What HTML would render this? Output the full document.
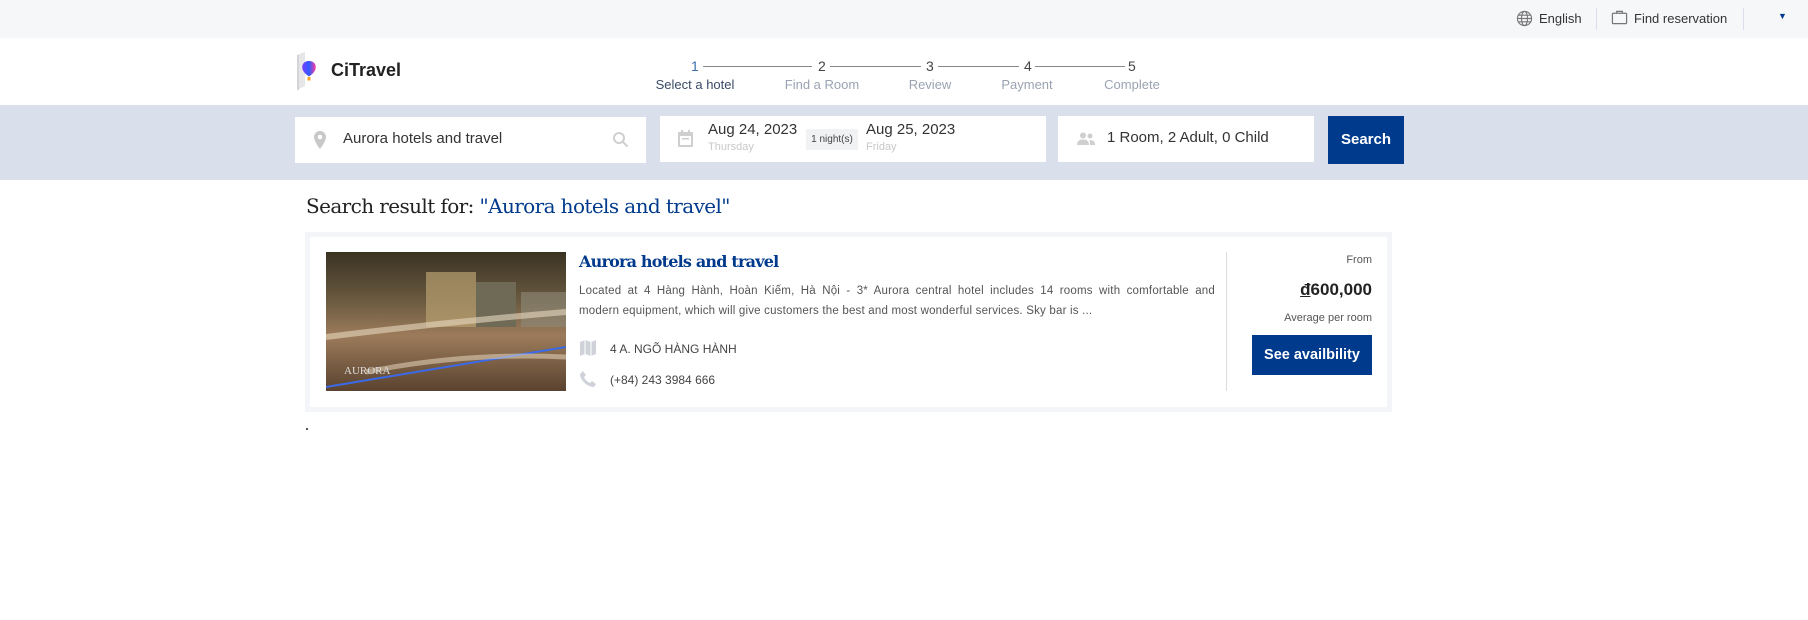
<!DOCTYPE html>
<html><head><meta charset="utf-8"><style>
*{margin:0;padding:0;box-sizing:border-box}
body{width:1808px;height:620px;background:#fff;font-family:"Liberation Sans",sans-serif;color:#222;position:relative;overflow:hidden}
.a{position:absolute}
.top{left:0;top:0;width:1808px;height:38px;background:#f6f7f9}
.band{left:0;top:105px;width:1808px;height:75px;background:#d9e0ec}
.box{background:#fff}
.step{font-size:13px;color:#6a7385;text-align:center;width:110px}
.num{font-size:14px;color:#444}
.line{height:1px;background:#888;top:66px}
.navy{background:#003a8c;color:#fff}
</style></head><body>
<div class="a top"></div>
<svg class="a" style="left:1516px;top:10px" width="17" height="17" viewBox="0 0 18 18" fill="none" stroke="#777" stroke-width="1.2"><circle cx="9" cy="9" r="7.5"/><ellipse cx="9" cy="9" rx="3.2" ry="7.5"/><path d="M1.5 9h15M2.5 5.5h13M2.5 12.5h13"/></svg>
<div class="a" style="left:1539px;top:11px;font-size:13px;color:#333">English</div>
<div class="a" style="left:1596px;top:8px;width:1px;height:22px;background:#dde"></div>
<svg class="a" style="left:1611px;top:9px" width="17" height="17" viewBox="0 0 18 18" fill="none" stroke="#777" stroke-width="1.3"><rect x="1.5" y="4.5" width="15" height="11" rx="1"/><path d="M6 4.5V2.5h6v2"/></svg>
<div class="a" style="left:1634px;top:11px;font-size:13px;color:#333">Find reservation</div>
<div class="a" style="left:1743px;top:8px;width:1px;height:22px;background:#dde"></div>
<div class="a" style="left:1778px;top:11px;font-size:9px;color:#003a8c">▼</div>

<svg class="a" style="left:293px;top:51px" width="30" height="40" viewBox="0 0 30 40"><path d="M4 4l8-3v34l-8 4z" fill="#e6e6e8"/><path d="M4 4h2v35H4z" fill="#d4d4d8"/><defs><linearGradient id="g" x1="0" x2="1"><stop offset="0" stop-color="#7a3cff"/><stop offset="0.5" stop-color="#2d5bff"/><stop offset="1" stop-color="#ff3ca0"/></linearGradient></defs><path d="M16 10c-6 0-8 5-6 9.5 1.7 3 4 4.5 6 6 2-1.5 4.3-3 6-6 2-4.5 0-9.5-6-9.5z" fill="url(#g)"/><rect x="14.5" y="26" width="3" height="3.5" fill="#f5a623"/></svg>
<div class="a" style="left:331px;top:60px;font-size:18px;font-weight:bold;color:#222">CiTravel</div>

<div class="a line" style="left:703px;width:109px"></div>
<div class="a line" style="left:830px;width:91px"></div>
<div class="a line" style="left:938px;width:81px"></div>
<div class="a line" style="left:1035px;width:90px"></div>
<div class="a num" style="left:691px;top:58px;color:#3a6ea8">1</div>
<div class="a num" style="left:818px;top:58px">2</div>
<div class="a num" style="left:926px;top:58px">3</div>
<div class="a num" style="left:1024px;top:58px">4</div>
<div class="a num" style="left:1128px;top:58px">5</div>
<div class="a step" style="left:640px;top:77px;color:#3b4a66">Select a hotel</div>
<div class="a step" style="left:767px;top:77px;color:#9aa3b2">Find a Room</div>
<div class="a step" style="left:875px;top:77px;color:#9aa3b2">Review</div>
<div class="a step" style="left:972px;top:77px;color:#9aa3b2">Payment</div>
<div class="a step" style="left:1077px;top:77px;color:#9aa3b2">Complete</div>

<div class="a band"></div>
<div class="a box" style="left:295px;top:117px;width:351px;height:46px"></div>
<svg class="a" style="left:314px;top:131px" width="12" height="18" viewBox="0 0 12 18"><path d="M6 0C2.7 0 0 2.6 0 6c0 4.5 6 12 6 12s6-7.5 6-12c0-3.4-2.7-6-6-6zm0 8.3A2.3 2.3 0 116 3.7a2.3 2.3 0 010 4.6z" fill="#c8c8c8"/></svg>
<div class="a" style="left:343px;top:130px;font-size:15px;color:#333">Aurora hotels and travel</div>
<svg class="a" style="left:612px;top:131px" width="17" height="17" viewBox="0 0 17 17" fill="none" stroke="#cfcfcf" stroke-width="2"><circle cx="7" cy="7" r="5"/><path d="M10.5 10.5l5 5"/></svg>

<div class="a box" style="left:660px;top:116px;width:386px;height:46px"></div>
<svg class="a" style="left:678px;top:130px" width="15" height="17" viewBox="0 0 15 17"><rect x="0" y="2" width="15" height="15" rx="1" fill="#cfcfcf"/><rect x="2" y="6" width="11" height="9" fill="#fff"/><rect x="3" y="0" width="2" height="4" fill="#cfcfcf"/><rect x="10" y="0" width="2" height="4" fill="#cfcfcf"/><rect x="4" y="8" width="7" height="1.5" fill="#cfcfcf"/></svg>
<div class="a" style="left:708px;top:121px;font-size:15px;color:#333">Aug 24, 2023</div>
<div class="a" style="left:708px;top:141px;font-size:11px;color:#c8c8c8">Thursday</div>
<div class="a" style="left:806px;top:129px;width:52px;height:21px;background:#f1f2f4;font-size:10px;color:#444;text-align:center;line-height:21px">1 night(s)</div>
<div class="a" style="left:866px;top:121px;font-size:15px;color:#333">Aug 25, 2023</div>
<div class="a" style="left:866px;top:141px;font-size:11px;color:#c8c8c8">Friday</div>

<div class="a box" style="left:1058px;top:116px;width:256px;height:46px"></div>
<svg class="a" style="left:1077px;top:132px" width="18" height="13" viewBox="0 0 18 13" fill="#cfcfcf"><circle cx="6" cy="3.5" r="3"/><path d="M0 13c0-4 2.5-5.5 6-5.5s6 1.5 6 5.5z"/><circle cx="13" cy="4" r="2.5"/><path d="M12.5 8c3 0 5.5 1 5.5 5h-5c0-2-.3-3.5-.5-5z"/></svg>
<div class="a" style="left:1107px;top:129px;font-size:15px;color:#333">1 Room, 2 Adult, 0 Child</div>

<div class="a navy" style="left:1328px;top:116px;width:76px;height:48px;font-size:15px;font-weight:bold;text-align:center;line-height:48px">Search</div>

<div class="a" style="left:306px;top:194px;font-size:20px;font-family:'DejaVu Serif','Liberation Serif',serif;color:#222;letter-spacing:-0.6px">Search result for: <span style="color:#003a8c">"Aurora hotels and travel"</span></div>

<div class="a" style="left:305px;top:232px;width:1087px;height:180px;background:#f3f5f8"></div>
<div class="a" style="left:310px;top:237px;width:1077px;height:170px;background:#fff"></div>
<svg class="a" style="left:326px;top:252px" width="240" height="139" viewBox="0 0 240 139"><defs><linearGradient id="s" x1="0" y1="0" x2="0" y2="1"><stop offset="0" stop-color="#3a3222"/><stop offset="0.35" stop-color="#6a5a40"/><stop offset="0.6" stop-color="#9c7b5a"/><stop offset="1" stop-color="#5a4330"/></linearGradient></defs><rect width="240" height="139" fill="url(#s)"/><rect x="100" y="20" width="50" height="55" fill="#b8a070" opacity=".7"/><rect x="150" y="30" width="40" height="45" fill="#6f6a55"/><rect x="195" y="40" width="45" height="35" fill="#8e8a7a" opacity=".6"/><path d="M0 85 Q120 70 240 60" stroke="#e8d8c0" stroke-width="6" fill="none" opacity=".6"/><path d="M0 135 L240 95" stroke="#3a6ae8" stroke-width="2"/><path d="M40 120 Q140 100 240 105" stroke="#f0e0c8" stroke-width="5" fill="none" opacity=".5"/><text x="18" y="122" font-size="11" fill="#ddd" font-family="Liberation Serif">AURORA</text></svg>

<div class="a" style="left:579px;top:252px;font-size:16px;font-family:'DejaVu Serif',serif;font-weight:bold;color:#003a8c;letter-spacing:-0.8px">Aurora hotels and travel</div>
<div class="a" style="left:579px;top:281px;width:636px;font-size:11.5px;line-height:20px;color:#555;letter-spacing:0.2px"><div style="text-align:justify;text-align-last:justify">Located at 4 Hàng Hành, Hoàn Kiếm, Hà Nội - 3* Aurora central hotel includes 14 rooms with comfortable and</div><div>modern equipment, which will give customers the best and most wonderful services. Sky bar is ...</div></div>
<svg class="a" style="left:580px;top:340px" width="16" height="16" viewBox="0 0 16 16" fill="#cfd3d9"><path d="M0 2l5-2 6 2 5-2v14l-5 2-6-2-5 2z"/><path d="M5 0v14M11 2v14" stroke="#fff" stroke-width="1"/></svg>
<div class="a" style="left:610px;top:342px;font-size:12px;color:#444">4 A. NGÕ HÀNG HÀNH</div>
<svg class="a" style="left:580px;top:371px" width="16" height="16" viewBox="0 0 16 16" fill="#cfd3d9"><path d="M3 0l3 4-2 2c1 2.5 3.5 5 6 6l2-2 4 3-2 3C7 16 0 9 0 3z"/></svg>
<div class="a" style="left:610px;top:373px;font-size:12px;color:#444">(+84) 243 3984 666</div>

<div class="a" style="left:1226px;top:252px;width:1px;height:139px;background:#ddd"></div>
<div class="a" style="left:1250px;top:254px;width:122px;text-align:right;font-size:11px;color:#555">From</div>
<div class="a" style="left:1230px;top:280px;width:142px;text-align:right;font-size:17px;font-weight:bold;color:#222"><span style="text-decoration:underline">đ</span>600,000</div>
<div class="a" style="left:1230px;top:312px;width:142px;text-align:right;font-size:11px;color:#555">Average per room</div>
<div class="a navy" style="left:1252px;top:335px;width:120px;height:40px;font-size:14.5px;font-weight:bold;text-align:center;line-height:40px">See availbility</div>
<div class="a" style="left:306px;top:428px;width:2px;height:2px;background:#555"></div>
</body></html>
